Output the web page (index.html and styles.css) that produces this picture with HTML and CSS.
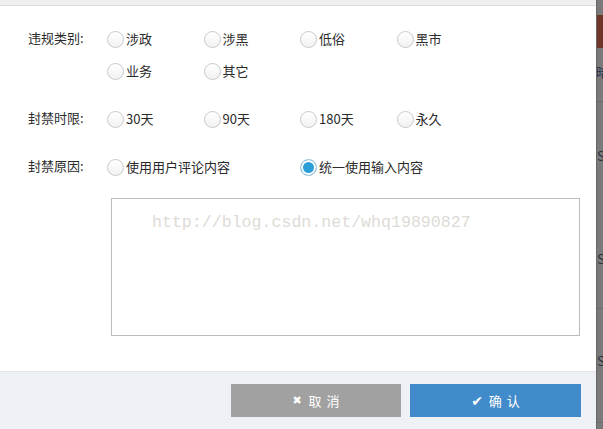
FILE: index.html
```html
<!DOCTYPE html>
<html lang="zh">
<head>
<meta charset="utf-8">
<link rel="stylesheet" href="styles.css">
</head>
<body>
<div class="screen">
  <div class="modal">
    <div class="modal-top"></div>
    <div class="modal-body">
      <div class="group">
        <div class="label">违规类别:</div>
        <div class="options">
          <label class="opt"><span class="radio"></span>涉政</label>
          <label class="opt"><span class="radio"></span>涉黑</label>
          <label class="opt"><span class="radio"></span>低俗</label>
          <label class="opt"><span class="radio"></span>黑市</label>
          <label class="opt"><span class="radio"></span>业务</label>
          <label class="opt"><span class="radio"></span>其它</label>
        </div>
      </div>
      <div class="group">
        <div class="label">封禁时限:</div>
        <div class="options">
          <label class="opt"><span class="radio"></span>30天</label>
          <label class="opt"><span class="radio"></span>90天</label>
          <label class="opt"><span class="radio"></span>180天</label>
          <label class="opt"><span class="radio"></span>永久</label>
        </div>
      </div>
      <div class="group">
        <div class="label">封禁原因:</div>
        <div class="options">
          <label class="opt wide"><span class="radio"></span>使用用户评论内容</label>
          <label class="opt wide"><span class="radio checked"></span>统一使用输入内容</label>
        </div>
      </div>
      <div class="textarea"><span class="mark">http://blog.csdn.net/whq19890827</span></div>
    </div>
    <div class="modal-footer">
      <button class="btn btn-cancel"><span class="ico">✖</span>取消</button>
      <button class="btn btn-ok"><span class="ico">✔</span>确认</button>
    </div>
  </div>
  <div class="backdrop">
    <div class="bd-a"></div>
    <div class="bd-red"></div>
    <div class="bd-row r1"><span class="bd-t t-an">暗</span></div>
    <div class="bd-row r2"><span class="bd-t t-sp1">SP</span><span class="bd-t t-sp2">SP</span></div>
    <div class="bd-row r3"><span class="bd-t t-sp3">SP</span></div>
    <div class="bd-row r4"></div>
  </div>
</div>
</body>
</html>
```
FILE: styles.css
```css
html, body {
  margin: 0;
  padding: 0;
}
body {
  width: 603px;
  height: 429px;
  overflow: hidden;
  font-family: "Noto Sans CJK SC", "Noto Sans", sans-serif;
  font-size: 13px;
  color: #2a2a2a;
  background: #fff;
}
.screen {
  display: flex;
  height: 429px;
}
.modal {
  width: 596px;
  display: flex;
  flex-direction: column;
  background: #fff;
}
.modal-top {
  height: 5px;
  background: #efefef;
  border-bottom: 1px solid #dcdcdc;
}
.modal-body {
  flex: 1;
  padding: 17px 0 0 28px;
}
.group {
  display: flex;
  margin-bottom: 16px;
}
.label {
  width: 79px;
  flex: none;
  height: 32px;
  line-height: 30px;
  white-space: nowrap;
}
.options {
  display: flex;
  flex-wrap: wrap;
  width: 400px;
}
.opt {
  width: 96.5px;
  height: 32px;
  display: flex;
  align-items: center;
  white-space: nowrap;
  line-height: 30px;
}
.opt.wide {
  width: 193px;
}
.radio {
  width: 15px;
  height: 15px;
  border: 1px solid #c9c9c9;
  border-radius: 50%;
  background: linear-gradient(#ffffff, #f1f1f1);
  margin-right: 2px;
  flex: none;
}
.radio.checked {
  border-color: #a9c6db;
  background: #2c9fd9;
  box-shadow: inset 0 0 0 2px #fff;
}
.textarea {
  width: 467px;
  height: 136px;
  margin: -1px 0 0 83px;
  border: 1px solid #bcbcbc;
  box-sizing: content-box;
}
.mark {
  display: block;
  margin: 14px 0 0 40px;
  font-family: "Liberation Mono", monospace;
  font-size: 16.6px;
  line-height: 20px;
  color: #dedbd6;
  white-space: nowrap;
}
.modal-footer {
  height: 58px;
  border-top: 1px solid #e2e5ea;
  background: #eef1f6;
  display: flex;
  justify-content: flex-end;
  align-items: flex-start;
  gap: 9px;
  padding: 12px 15px 0 0;
  box-sizing: border-box;
}
.btn {
  height: 33px;
  border: none;
  color: #fff;
  font-family: "Noto Sans CJK SC", sans-serif;
  font-size: 13px;
  letter-spacing: 5px;
  display: flex;
  align-items: center;
  justify-content: center;
  padding: 0 0 0 5px;
}
.btn-cancel {
  width: 170px;
  background: #a1a1a1;
}
.btn-ok {
  width: 171px;
  background: #428bca;
}
.ico {
  font-family: "DejaVu Sans", sans-serif;
  font-size: 11px;
  margin-right: 7px;
  letter-spacing: 0;
}
.btn-ok .ico {
  font-size: 14px;
  margin-right: 6px;
}
.backdrop {
  flex: 1;
  background: #7a7a7a;
  border-left: 1px solid #666;
  overflow: hidden;
  display: flex;
  flex-direction: column;
}
.bd-a {
  height: 15px;
}
.bd-red {
  height: 33px;
  background: #6e3528;
}
.bd-row {
  border-bottom: 1px solid #6a6a6a;
  position: relative;
  font-size: 13px;
  color: #2b3140;
}
.r1 { height: 53px; }
.r2 { height: 206px; }
.r3 { height: 113px; }
.r4 { flex: 1; border-bottom: none; }
.bd-t {
  position: absolute;
  left: -1px;
  white-space: nowrap;
}
.t-an { top: 14px; color: #2a3550; }
.t-sp1 { top: 44px; left: 0; }
.t-sp2 { top: 147px; left: 0; }
.t-sp3 { top: 42px; left: 0; }
```
